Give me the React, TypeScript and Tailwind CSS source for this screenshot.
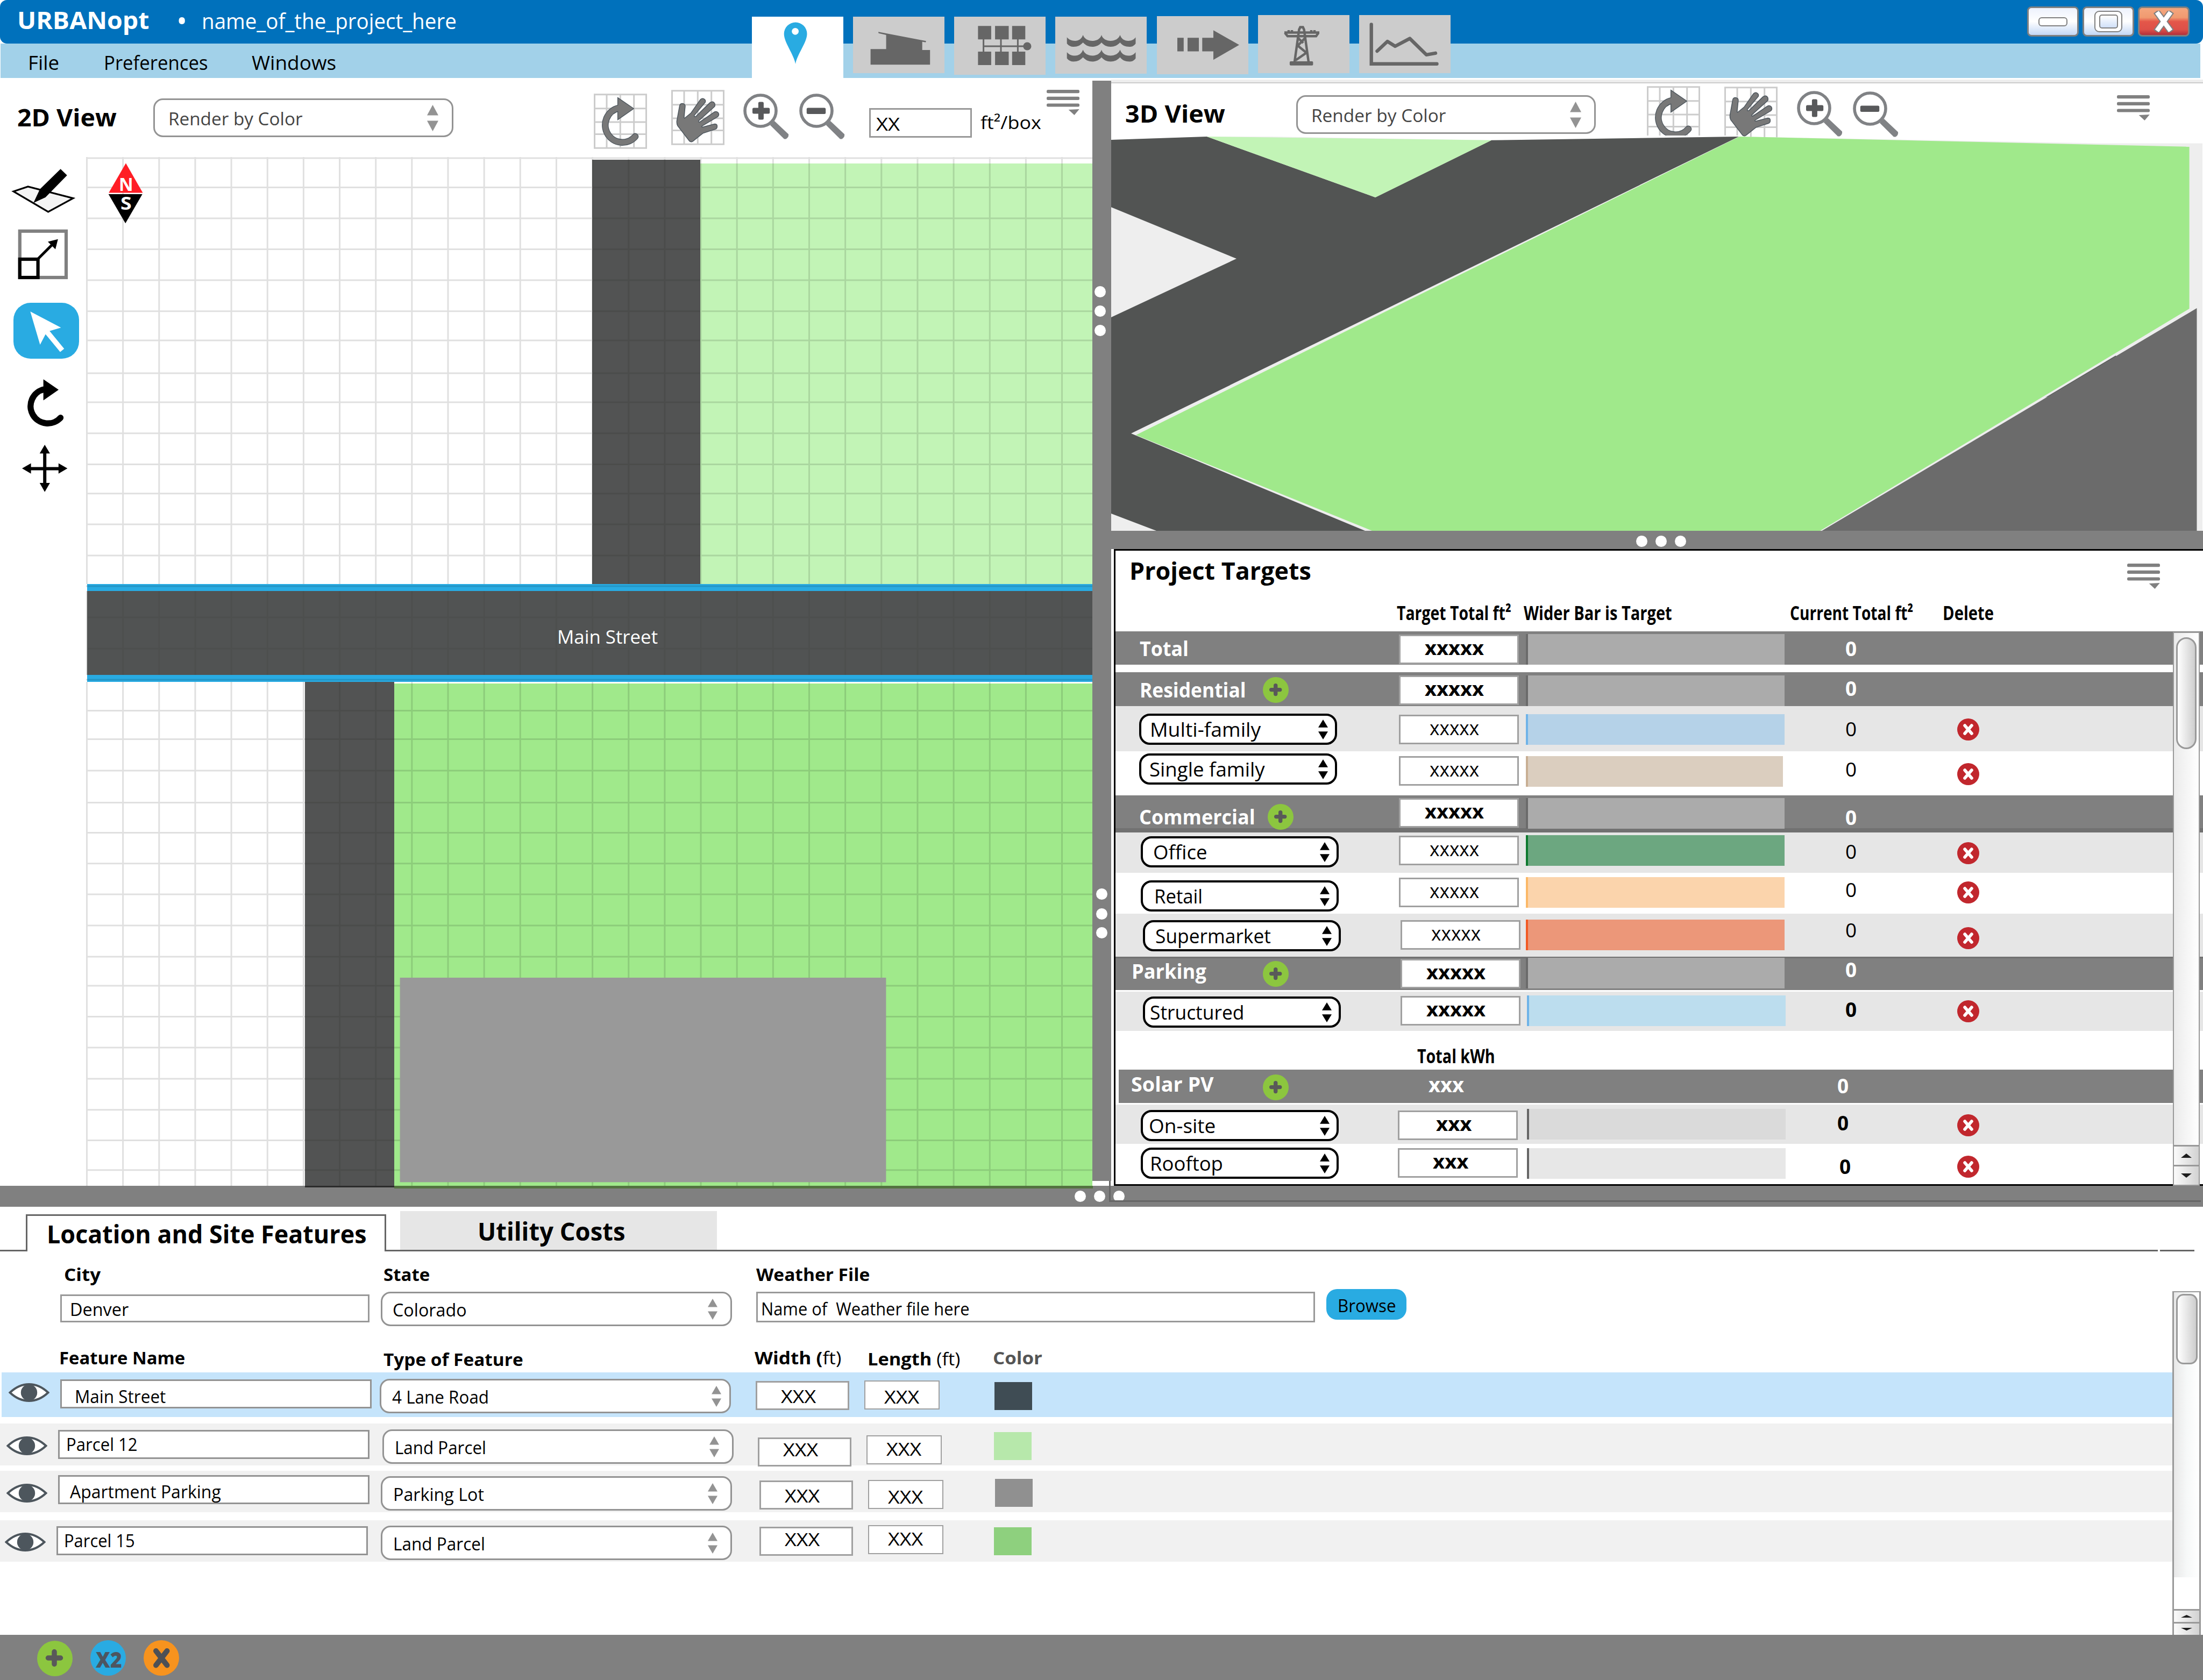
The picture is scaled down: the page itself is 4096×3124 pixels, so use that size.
import { useLayoutEffect, useRef, useState } from 'react';
import type { ReactNode } from 'react';

/** One line of text, condensed or widened to a given ink width. */
function Fit({ w, className = '', children }: { w: number; className?: string; children: ReactNode }) {
  const ref = useRef<HTMLSpanElement>(null);
  const [scale, setScale] = useState(1);
  useLayoutEffect(() => {
    if (ref.current) setScale((w + 4) / ref.current.offsetWidth);
  }, [w]);
  return (
    <span className={`block shrink-0 whitespace-nowrap leading-[40px] ${className}`} style={{ width: w }}>
      <span ref={ref} className="-ml-px block w-max origin-left" style={{ transform: `translateY(1.5px) scaleX(${scale})` }}>
        {children}
      </span>
    </span>
  );
}

function SortArrows({ className }: { className: string }) {
  return (
    <svg viewBox="0 0 20 48" preserveAspectRatio="none" className={`shrink-0 ${className}`} fill="currentColor">
      <path d="M10 0 L20 19 H0 Z M0 29 H20 L10 48 Z" />
    </svg>
  );
}

function GraySelect({ text, w, className, textClass, arrowClass }: { text: string; w: number; className: string; textClass: string; arrowClass: string }) {
  return (
    <div className={`flex shrink-0 items-center justify-between rounded-[18px] border-[3px] border-[#939393] bg-white ${className}`}>
      <Fit w={w} className={textClass}>{text}</Fit>
      <SortArrows className={`text-[#939393] ${arrowClass}`} />
    </div>
  );
}

function MenuIcon({ className }: { className: string }) {
  return (
    <svg viewBox="0 0 61 47" className={`h-[47px] w-[61px] shrink-0 ${className}`} fill="#808080">
      <rect width="61" height="6.2" rx="2.5" />
      <rect y="12.7" width="61" height="6.2" rx="2.5" />
      <rect y="25.4" width="61" height="6.2" rx="2.5" />
      <path d="M40.7 37 L60.7 36 L51.5 47 Z" />
    </svg>
  );
}

function IconGrid() {
  return (
    <path
      d="M1.5 1.5 H97.9 V101.5 H1.5 Z M24.1 1 V102 M49.5 1 V102 M75 1 V102 M0 27.6 H99.4 M0 53 H99.4 M0 75.5 H99.4"
      fill="none"
      stroke="#cccccc"
      strokeWidth="3"
    />
  );
}

function RotateTool({ className }: { className: string }) {
  return (
    <svg viewBox="0 0 99.4 103" className={`h-[103px] w-[99px] shrink-0 ${className}`}>
      <IconGrid />
      <path d="M46 27 A32 32.4 0 1 0 77.4 80" fill="none" stroke="#4d565d" strokeWidth="12.6" strokeLinecap="round" />
      <path d="M44.8 7.4 L74.6 27.9 L44.8 48.6 Z" fill="#787878" stroke="#4d565d" strokeWidth="1.4" />
      <path d="M48 26.6 A32 32.4 0 1 0 77.4 80" fill="none" stroke="#787878" strokeWidth="10" strokeLinecap="round" />
    </svg>
  );
}

function HandTool({ className, shift = 0 }: { className: string; shift?: number }) {
  return (
    <svg viewBox="0 0 99.4 103" className={`h-[103px] w-[99px] shrink-0 ${className}`}>
      <IconGrid />
      <path
        transform={`translate(0 ${shift})`}
        d="M34 95.5 L12 67 Q10 63 10.5 58 L15.7 29.5 Q16.5 25.3 20.7 25.3 Q26.5 26 26 31 L23.8 51 Q24 54 26 52 L37 43 L53 20 Q56 15.5 60 16.3 Q65 18.5 63.5 23 L43.4 47 Q42 51 46 49.5 L72 24 Q76 21 79 22.8 Q83 26 81 31 L51.5 57.5 Q50 61 54 59.5 L80 41.5 Q85 39 88 43 Q90 47 87 50 L57.5 67.5 Q56 70 60 69 L81 63.5 Q86 63.5 85.7 68 Q86 72 82 73.5 L59 81 L40.5 95.7 Q37 98 34 95.5 Z"
        fill="#787878"
        stroke="#4d565d"
        strokeWidth="1.5"
      />
    </svg>
  );
}

function ZoomTool({ plus = false, className }: { plus?: boolean; className: string }) {
  return (
    <svg viewBox="0 0 85 85" className={`h-[85px] w-[85px] shrink-0 ${className}`}>
      <circle cx="32" cy="32" r="29" fill="#fff" stroke="#808285" strokeWidth="5.6" />
      <path d="M57.7 50.7 L84 75.5 Q85 81 79.5 84.5 L76 84.5 L49.8 58.4 Z" fill="#808285" />
      {plus ? (
        <>
          <rect x="17" y="26.6" width="32.2" height="10.8" rx="2.5" fill="#58595b" />
          <rect x="27.9" y="15.6" width="10" height="32.8" rx="2.5" fill="#58595b" />
        </>
      ) : (
        <rect x="13.8" y="26.4" width="35.4" height="11.5" rx="2.5" fill="#58595b" />
      )}
    </svg>
  );
}

const tabs = [
  {
    box: 'mt-[3px] h-[114px] bg-white',
    icon: (
      <g>
        <path d="M81.1 88 C78 70 59.7 48 59.7 32 A21.4 21.4 0 1 1 102.5 32 C102.5 48 84 70 81.1 88 Z" fill="#29abe2" />
        <circle cx="80.6" cy="27.3" r="6.4" fill="#fff" />
      </g>
    ),
  },
  {
    box: 'mt-[3px] h-[105px] bg-[#cccccc]',
    icon: <path d="M47.1 28.3 L135.9 45.3 L135 47.8 L128.7 46.6 V62 H143.2 V89.3 H32.6 V60.3 H61.6 V34 L47.5 30.8 Z" />,
  },
  {
    box: 'mt-[3px] h-[108px] bg-[#cccccc]',
    icon: (
      <g>
        <path d="M44.4 17.3 H68.9 V42.3 H44.4 Z M76.1 17.3 H101.5 V42.3 H76.1 Z M107.8 17.3 H132.3 V42.3 H107.8 Z M44.4 65 H68.9 V90 H44.4 Z M76.1 65 H101.5 V90 H76.1 Z M107.8 65 H132.3 V90 H107.8 Z" />
        <path d="M54.6 42 V65 M87 42 V65 M118.4 42 V65 M54 55 H130" fill="none" stroke="#666" strokeWidth="3" />
        <circle cx="135.9" cy="55" r="7.6" />
      </g>
    ),
  },
  {
    box: 'mt-[3px] h-[106px] bg-[#cccccc]',
    icon: [0, 27.6].map((dy) => (
      <path
        key={dy}
        transform={`translate(0 ${dy})`}
        d="M21.7 38.3 C26 43 30 45 37 45 C44 45 49 41 51.6 34 C54 41 61 45 69 45 C77 45 84 41 86 34 C88 41 95 45 103 45 C111 45 118 41 120.5 34 C123 41 128 45 136 45 C142 45 146 43 149.5 38.3 V50 C146 55 142 56 138 56 C130 56 124 53 120.5 48 C116 53 110 56 103 56 C96 56 90 53 86 48 C82 53 76 56 69 56 C62 56 56 53 51.6 48 C47 53 42 56 34 56 C29 56 25 54 21.7 50 Z"
      />
    )),
  },
  {
    box: 'mt-[2px] h-[108px] bg-[#cccccc]',
    icon: <path d="M38 40.3 H49.8 V65.6 H38 Z M57 40.3 H78 V65.6 H57 Z M84.3 40.3 H105 V26.3 L153 53.6 L105 81.3 V65.6 H84.3 Z" />,
  },
  {
    box: 'h-[108px] bg-[#cccccc]',
    icon: (
      <g>
        <rect x="58.9" y="86" width="43.5" height="7.8" rx="2" />
        <path
          d="M68 87 L76.4 27 L78.5 22.5 H83.5 L85.6 27 L94 87 M49 32.6 H114 M50 33 L55 39.3 H108 L112.5 33 M57 28 V33 M63 28 V33 M99 28 V33 M105 28 V33 M88 42 L74 57 L90 70 L70 84 M75 43 L84 52"
          fill="none"
          stroke="#666"
          strokeWidth="4.5"
        />
      </g>
    ),
  },
  {
    box: 'h-[108px] bg-[#cccccc]',
    icon: (
      <g fill="none" stroke="#666" strokeWidth="6.4" strokeLinecap="round">
        <path d="M22.7 17.5 V90.8 H144.5" />
        <path d="M33.5 67 L52.6 49 L67 58 L94.2 43.6 L125 73.8 L142 70.8" strokeLinejoin="round" />
      </g>
    ),
  },
];

function Header() {
  return (
    <header className="relative h-[145px] text-white">
      <div className="flex h-[81px] items-start rounded-[13px] bg-[#0071bc]">
        <Fit w={241} className="ml-[33px] mt-[15px] text-[45px] font-bold">URBANopt</Fit>
        <span className="ml-[54px] mt-[18px] block w-[16px] text-[54px] leading-[40px]">•</span>
        <Fit w={470} className="ml-[32px] mt-[17px] text-[40px]">name_of_the_project_here</Fit>
        <div className="ml-auto mr-[25px] mt-[12px] flex gap-[7px]">
          <div className="flex h-[56px] w-[96px] items-center justify-center rounded-[8px] border-[3px] border-[#808080] bg-gradient-to-b from-[#edf2fd] via-white to-[#c4d8f5]">
            <div className="h-[17px] w-[54px] rounded-[6px] border-2 border-[#808080] bg-white" />
          </div>
          <div className="flex h-[56px] w-[96px] items-center justify-center rounded-[8px] border-[3px] border-[#808080] bg-gradient-to-b from-[#edf2fd] via-white to-[#c4d8f5]">
            <div className="flex h-[40px] w-[52px] items-center justify-center rounded-[9px] border-2 border-[#808080] bg-white">
              <div className="h-[26px] w-[35px] rounded-[5px] border-2 border-[#808080] bg-gradient-to-b from-white to-[#d0e0f8]" />
            </div>
          </div>
          <div className="flex h-[56px] w-[96px] items-center justify-center rounded-[8px] border-[3px] border-[#808080] bg-linear-[to_bottom,#f4a67e_0%,#f09a70_35%,#e4574a_50%,#dd5048_80%,#b2303c_100%]">
            <svg viewBox="0 0 42 40" className="h-[40px] w-[42px]">
              <path d="M7 1 L35 39 M35 1 L7 39" stroke="#808080" strokeWidth="12.5" />
              <path d="M8.3 2.8 L33.7 37.2 M33.7 2.8 L8.3 37.2" stroke="#fff" strokeWidth="8.6" />
            </svg>
          </div>
        </div>
      </div>
      <nav className="ml-px mr-[5px] flex h-[64px] items-start bg-[#a2d1e9] text-[36px] text-black">
        <Fit w={54} className="ml-[52px] mt-[14px]">File</Fit>
        <Fit w={190} className="ml-[87px] mt-[14px]">Preferences</Fit>
        <Fit w={153} className="ml-[85px] mt-[14px]">Windows</Fit>
      </nav>
      <div className="absolute left-[1397.5px] top-[28px] flex items-start gap-[18.3px]">
        {tabs.map((t, i) => (
          <div key={i} className={`w-[170px] ${t.box}`}>
            <svg viewBox="0 0 170 105" className="h-[105px] w-[170px]" fill="#666666">{t.icon}</svg>
          </div>
        ))}
      </div>
    </header>
  );
}

function DrawingTools() {
  return (
    <div className="flex w-[160px] shrink-0 flex-col items-start">
      <svg viewBox="20 312 120 87" className="ml-[20px] mt-[20px] h-[87px] w-[120px]">
        <path d="M25 356 L52 347 L136 368.6 L89.6 394 Z" fill="#f4f4f4" stroke="#000" strokeWidth="3.2" />
        <path d="M112.6 314.2 L124.7 326.1 L84.5 367.1 L62.2 377.2 L74.2 351.7 Z" />
      </svg>
      <svg viewBox="33 426 94 94" className="ml-[33px] mt-[27px] h-[94px] w-[94px]">
        <rect x="36.8" y="429.8" width="86.2" height="86.2" fill="#fff" stroke="#808080" strokeWidth="6.2" />
        <rect x="36.8" y="482" width="33.8" height="34" fill="#fff" stroke="#000" strokeWidth="6.2" />
        <path d="M69 483 L97 455" stroke="#000" strokeWidth="5" />
        <path d="M107.8 444.7 L89 449.5 L103 463.6 Z" />
      </svg>
      <div className="ml-[25px] mt-[43px] flex h-[104px] w-[122px] rounded-[32px] bg-[#29abe2]">
        <svg viewBox="25 562 122 104" className="h-[104px] w-[122px]" fill="#fff">
          <path d="M56.3 578.3 L113.4 608.2 L92.2 614.4 L119.3 647.5 L111.9 653.6 L84.7 620.6 L74.5 640 Z" />
        </svg>
      </div>
      <svg viewBox="50 703 70 91" className="ml-[50px] mt-[37px] h-[91px] w-[70px]">
        <path d="M82 723 A32 32 0 1 0 112.6 775.7" fill="none" stroke="#000" strokeWidth="11.4" />
        <circle cx="112.6" cy="775.7" r="5.6" />
        <path d="M80.6 704.3 L109 723.7 L80.6 743.6 Z" />
      </svg>
      <svg viewBox="40 825 86 90" className="ml-[40px] mt-[31px] h-[90px] w-[86px]">
        <path d="M83.2 835 V905 M50 870.6 H116" stroke="#000" strokeWidth="6" />
        <path d="M83.2 826 L92.9 842.3 H73.7 Z M83.2 913.7 L92.9 897 H73.7 Z M41 870 L57.6 860.4 V879.8 Z M125.4 870 L108.8 860.4 V879.8 Z" />
      </svg>
    </div>
  );
}

const gridX = Array.from({ length: 28 }, (_, i) => 161.5 + i * 67.15);
const gridY = [
  294, 348.6, 406, 463.6, 521, 578.7, 633, 694, 748, 805.7, 863.5, 917.7, 975, 1033, 1090, 1148, 1206, 1264, 1321.5, 1374.4, 1433,
  1492.5, 1548.5, 1605.8, 1663, 1721, 1779, 1833, 1890.5, 1948, 2006, 2063.7, 2120.5, 2175.8,
];

function SiteMap() {
  return (
    <div className="relative h-[1913px] w-[1871px] shrink-0">
      <svg viewBox="160 292 1871 1913" className="h-[1913px] w-[1871px]">
        <rect x="1101" y="297" width="201" height="800" fill="#525453" />
        <rect x="1302" y="304" width="729" height="782" fill="#c2f4b6" />
        <rect x="567" y="1268" width="166" height="940" fill="#525453" />
        <rect x="733" y="1271" width="1298" height="940" fill="#a0e98b" />
        <rect x="162" y="1086" width="1869" height="182" fill="#29abe2" />
        <rect x="162" y="1099" width="1869" height="156" fill="#525453" />
        <path
          d={gridX.map((x) => `M${x} 292 V1086 M${x} 1099 V1255 M${x} 1268 V2205`).join(' ') + gridY.map((y) => `M160 ${y} H2031`).join(' ')}
          stroke="#000"
          strokeOpacity="0.12"
          strokeWidth="3"
        />
        <path d="M1101 297 H1302 V1086 H1101 Z M567 1268 H733 V2205 H567 Z" fill="#525453" fillOpacity="0.3" />
        <rect x="162" y="1099" width="1869" height="156" fill="#525453" fillOpacity="0.6" />
        <rect x="743.6" y="1818" width="903.8" height="380.3" fill="#999999" />
        <path d="M234 303.6 L265.5 358.6 H202.2 Z" fill="#ff1d25" />
        <path d="M201.7 361 H264.7 L233.2 415.2 Z" />
      </svg>
      <Fit w={23} className="absolute left-[62px] top-[28px] text-[34px] font-bold text-white">N</Fit>
      <Fit w={17} className="absolute left-[65px] top-[63px] text-[34px] font-bold text-white">S</Fit>
      <Fit w={183} className="absolute left-[877px] top-[870px] text-[35px] text-white">Main Street</Fit>
    </div>
  );
}

function View2D() {
  return (
    <section className="w-[2031px] shrink-0">
      <div className="flex h-[147px] items-start">
        <Fit w={181} className="ml-[33px] mt-[51px] text-[45px] font-bold">2D View</Fit>
        <GraySelect text="Render by Color" w={246} className="ml-[71px] mt-[38px] h-[72px] w-[558px]" textClass="ml-[26px] text-[33px] text-[#444]" arrowClass="mr-[25px] h-[49px] w-[21px]" />
        <RotateTool className="ml-[261px] mt-[29px]" />
        <HandTool className="ml-[45px] mt-[22px]" />
        <ZoomTool plus className="ml-[35px] mt-[29px]" />
        <ZoomTool className="ml-[19px] mt-[29px]" />
        <div className="ml-[45px] mt-[56px] flex h-[55px] w-[191px] shrink-0 items-center border-[3px] border-[#999]">
          <Fit w={40} className="ml-[11px] text-[33px]">XX</Fit>
        </div>
        <Fit w={109} className="ml-[17px] mt-[61px] text-[33px]">ft²/box</Fit>
        <MenuIcon className="ml-[13px] mt-[22px]" />
      </div>
      <div className="flex">
        <DrawingTools />
        <SiteMap />
      </div>
    </section>
  );
}

function Dot({ className = '' }: { className?: string }) {
  return <span className={`block size-[21px] shrink-0 rounded-full bg-white ${className}`} />;
}

function View3D() {
  return (
    <section>
      <div className="mt-[3px] h-[7px] border-b-2 border-[#cccccc] bg-[#eeeeee]" />
      <div className="flex h-[97px] items-start">
        <Fit w={182} className="ml-[27px] mt-[34px] text-[45px] font-bold">3D View</Fit>
        <GraySelect text="Render by Color" w={247} className="ml-[135px] mt-[22px] h-[72px] w-[557px]" textClass="ml-[26px] text-[33px] text-[#444]" arrowClass="mr-[24px] h-[49px] w-[21px]" />
        <RotateTool className="ml-[95px] mt-[5px]" />
        <HandTool className="ml-[45px] mt-[6px]" shift={-5} />
        <ZoomTool plus className="ml-[36px] mt-[14px]" />
        <ZoomTool className="ml-[19px] mt-[15px]" />
        <MenuIcon className="ml-[406px] mt-[22px]" />
      </div>
      <svg viewBox="2066 252 2030 735" className="relative z-10 h-[735px] w-[2030px]">
        <path d="M2066 260 L2244 254 L3233 254 L3900 266.5 H4095 V987 H2066 Z" fill="#eeeeee" />
        <path d="M2066 254 H2244 L2066 260 Z M2244 252 H3233 V254 L2773 260.8 Z" fill="#fff" />
        <path d="M2066 260 L2244 254 L2557 367 L2773 260.8 L3233 254 L4000 700 L2538 987 H2150 L2066 955 V590 L2299 481 L2066 385.3 Z" fill="#525453" />
        <path d="M2244 254 L2773 260.8 L2557.3 367 Z" fill="#c2f4b6" />
        <path d="M3233 254 L2103 806 L2538 987 H3388 L4083 572 L4070 300 Z" fill="#eeeeee" />
        <path d="M3234 254 L4070.6 272.8 V574 L3384 987 H2551 L2112 809 Z" fill="#a0e98b" />
        <path d="M3387.5 987 L4084.5 573 V987 Z" fill="#6b6b6b" />
      </svg>
    </section>
  );
}

type Target = {
  row: string;
  name: string;
  nameW: number;
  nameClass: string;
  plus?: string;
  select?: string;
  box?: string;
  value: string;
  valueW: number;
  valueClass: string;
  bar?: string;
  zero: string;
  del?: string;
};

const band = 'bg-[#808080] text-white';
const targets: Target[] = [
  { row: `h-[62px] mb-[14px] ${band}`, name: 'Total', nameW: 87, nameClass: 'ml-[46px] mt-[10px]', box: 'ml-[3px] mt-[6px]', value: 'xxxxx', valueW: 106, valueClass: 'ml-[46px] font-bold', bar: 'ml-[3px] mt-[5px] bg-[#ababab] border-[#6b6b6b]', zero: 'ml-[103px] mt-[10px] font-bold' },
  { row: `h-[63px] ${band}`, name: 'Residential', nameW: 194, nameClass: 'ml-[46px] mt-[11px]', plus: 'ml-[34px] mt-[9px]', box: 'ml-[3px] mt-[6px]', value: 'xxxxx', valueW: 106, valueClass: 'ml-[46px] font-bold', bar: 'ml-[3px] mt-[6px] bg-[#ababab] border-[#6b6b6b]', zero: 'ml-[103px] mt-[8px] font-bold' },
  { row: 'h-[84px] bg-[#e6e6e6]', name: 'Multi-family', nameW: 202, nameClass: 'ml-[17px]', select: 'ml-[44px] mt-[14px]', box: 'ml-[3px] mt-[16px]', value: 'xxxxx', valueW: 88, valueClass: 'ml-[55px]', bar: 'ml-[3px] mt-[15px] bg-[#b5d2e8] border-[#6fb3e8]', zero: 'ml-[103px] mt-[20px]', del: 'mt-[23px]' },
  { row: 'h-[82px]', name: 'Single family', nameW: 211, nameClass: 'ml-[16px]', select: 'ml-[44px] mt-[4px]', box: 'ml-[3px] mt-[9px]', value: 'xxxxx', valueW: 88, valueClass: 'ml-[55px]', bar: 'ml-[3px] mr-[14px] mt-[9px] bg-[#dbcebf] border-[#c8af94]', zero: 'ml-[103px] mt-[11px]', del: 'mt-[22px]' },
  { row: `h-[69px] shadow-[inset_0_-8px_0_#717171] ${band}`, name: 'Commercial', nameW: 212, nameClass: 'ml-[45px] mt-[18px]', plus: 'ml-[26px] mt-[16px]', box: 'ml-[3px] mt-[5px]', value: 'xxxxx', valueW: 106, valueClass: 'ml-[46px] font-bold', bar: 'ml-[3px] mt-[5px] bg-[#ababab] border-[#6b6b6b]', zero: 'ml-[103px] mt-[19px] font-bold' },
  { row: 'h-[75px] bg-[#e6e6e6]', name: 'Office', nameW: 97, nameClass: 'ml-[20px]', select: 'ml-[47px] mt-[7px]', box: 'ml-[3px] mt-[6px]', value: 'xxxxx', valueW: 88, valueClass: 'ml-[55px]', bar: 'ml-[3px] mt-[5px] bg-[#6ca780] border-[#0f7a30]', zero: 'ml-[103px] mt-[13px]', del: 'mt-[18px]' },
  { row: 'h-[76px]', name: 'Retail', nameW: 86, nameClass: 'ml-[22px]', select: 'ml-[47px] mt-[14px]', box: 'ml-[3px] mt-[9px]', value: 'xxxxx', valueW: 88, valueClass: 'ml-[55px]', bar: 'ml-[3px] mt-[8px] bg-[#fbd4ac] border-[#fbb867]', zero: 'ml-[103px] mt-[9px]', del: 'mt-[16px]' },
  { row: 'h-[80px] bg-[#e6e6e6]', name: 'Supermarket', nameW: 211, nameClass: 'ml-[20px]', select: 'ml-[51px] mt-[12px]', box: 'ml-[6px] mt-[12px]', value: 'xxxxx', valueW: 88, valueClass: 'ml-[55px]', bar: 'ml-[3px] mt-[11px] bg-[#ec9779] border-[#f15a24]', zero: 'ml-[103px] mt-[8px]', del: 'mt-[25px]' },
  { row: `h-[62px] mb-[3px] shadow-[inset_0_3px_0_#717171] ${band}`, name: 'Parking', nameW: 135, nameClass: 'ml-[31px] mt-[5px]', plus: 'ml-[108px] mt-[8px]', box: 'ml-[6px] mt-[4px]', value: 'xxxxx', valueW: 106, valueClass: 'ml-[46px] font-bold', bar: 'ml-[3px] mt-[2px] bg-[#ababab] border-[#6b6b6b]', zero: 'ml-[103px] mt-[2px] font-bold' },
  { row: 'h-[73px] bg-[#e6e6e6]', name: 'Structured', nameW: 171, nameClass: 'ml-[10px]', select: 'ml-[51px] mt-[9px]', box: 'ml-[6px] mt-[8px]', value: 'xxxxx', valueW: 106, valueClass: 'ml-[46px] font-bold', bar: 'ml-[5px] mt-[7px] bg-[#bcddee] border-[#6fb3e8]', zero: 'ml-[103px] mt-[11px] font-bold', del: 'mt-[16px]' },
];

const solar: Target[] = [
  { row: `h-[62px] mb-[3px] shadow-[inset_6px_0_0_#fff] ${band}`, name: 'Solar PV', nameW: 150, nameClass: 'ml-[30px] mt-[5px]', plus: 'ml-[94px] mt-[9px]', value: 'xxx', valueW: 62, valueClass: 'ml-[59px] mt-[6px] font-bold', zero: 'ml-[88px] mt-[8px] font-bold' },
  { row: 'h-[73px] bg-[#e6e6e6]', name: 'On-site', nameW: 120, nameClass: 'ml-[12px]', select: 'ml-[47px] mt-[10px]', box: 'ml-px mt-[11px]', value: 'xxx', valueW: 62, valueClass: 'ml-[69px] font-bold', bar: 'ml-[5px] mt-[8px] bg-[#dadada] border-[#666]', zero: 'ml-[88px] mt-[12px] font-bold', del: 'mt-[18px]' },
  { row: 'h-[75px]', name: 'Rooftop', nameW: 132, nameClass: 'ml-[14px]', select: 'ml-[47px] mt-[7px]', box: 'ml-px mt-[8px]', value: 'xxx', valueW: 62, valueClass: 'ml-[63px] font-bold', bar: 'ml-[5px] mt-[8px] bg-[#e7e7e7] border-[#666]', zero: 'ml-[92px] mt-[20px] font-bold', del: 'mt-[22px]' },
];

function TargetRow({ t }: { t: Target }) {
  return (
    <div className={`grid grid-cols-[524px_236px_495px_284px_1fr] items-start text-[37px] ${t.row}`}>
      {t.select ? (
        <div className={`flex h-[58px] w-[368px] items-center justify-between rounded-[20px] border-4 border-black bg-white ${t.select}`}>
          <Fit w={t.nameW} className={`-mt-[4px] ${t.nameClass}`}>{t.name}</Fit>
          <SortArrows className="mr-[13px] h-[37px] w-[18px] text-black" />
        </div>
      ) : (
        <div className="flex items-start">
          <Fit w={t.nameW} className={`font-bold ${t.nameClass}`}>{t.name}</Fit>
          {t.plus && (
            <svg viewBox="0 0 48 48" className={`size-[48px] ${t.plus}`}>
              <circle cx="24" cy="24" r="24" fill="#8cc63f" />
              <path d="M15.7 23.6 H31.7 M23.7 15.6 V31.6" stroke="#595959" strokeWidth="7.4" strokeLinecap="round" />
            </svg>
          )}
        </div>
      )}
      {t.box ? (
        <div className={`h-[55px] w-[223px] border-[3px] border-[#a0a0a0] bg-white text-[36px] text-black ${t.box}`}>
          <Fit w={t.valueW} className={t.valueClass}>{t.value}</Fit>
        </div>
      ) : (
        <Fit w={t.valueW} className={t.valueClass}>{t.value}</Fit>
      )}
      {t.bar ? <div className={`h-[57px] max-w-[481px] border-l-4 ${t.bar}`} /> : <span />}
      <Fit w={17} className={t.zero}>0</Fit>
      {t.del && (
        <svg viewBox="0 0 42 42" className={`ml-[26px] size-[41px] ${t.del}`}>
          <circle cx="21" cy="21" r="21" fill="#c1272d" />
          <path d="M14.5 13.5 L27.5 28.5 M27.5 13.5 L14.5 28.5" stroke="#fff" strokeWidth="6" strokeLinecap="round" />
        </svg>
      )}
    </div>
  );
}

function ScrollButtons({ className, icon }: { className: string; icon: string }) {
  return (
    <>
      <div className={`flex items-center justify-center border-t-[3px] border-[#999] bg-gradient-to-r from-[#fbfbfb] to-[#d2d2d2] ${className}`}>
        <svg viewBox="0 0 20 8" preserveAspectRatio="none" className={icon}><path d="M10 0 L20 8 H0 Z" fill="#1e1e1e" /></svg>
      </div>
      <div className={`flex items-center justify-center border-t-[3px] border-[#999] bg-gradient-to-r from-[#fbfbfb] to-[#d2d2d2] ${className}`}>
        <svg viewBox="0 0 20 8" preserveAspectRatio="none" className={icon}><path d="M0 0 H20 L10 8 Z" fill="#1e1e1e" /></svg>
      </div>
    </>
  );
}

function ProjectTargets() {
  return (
    <section className="ml-[3px] h-[1184px] bg-white pl-[2px]">
      <div className="relative h-[1184px] border-y-[3px] border-l-[3px] border-black">
        <div className="flex h-[94px] items-start">
          <Fit w={334} className="ml-[27px] mt-[15px] text-[45px] font-bold">Project Targets</Fit>
          <MenuIcon className="ml-[1520px] mt-[24px]" />
        </div>
        <div className="grid h-[56px] grid-cols-[524px_236px_495px_284px_1fr] items-start text-[36px] font-bold">
          <span />
          <Fit w={209}>Target Total ft²</Fit>
          <Fit w={272}>Wider Bar is Target</Fit>
          <Fit w={225}>Current Total ft²</Fit>
          <Fit w={91}>Delete</Fit>
        </div>
        {targets.map((t) => <TargetRow key={t.name} t={t} />)}
        <div className="h-[72px] pl-[562px] pt-[25px]">
          <Fit w={141} className="text-[36px] font-bold">Total kWh</Fit>
        </div>
        {solar.map((t) => <TargetRow key={t.name} t={t} />)}
        <div className="absolute right-[6px] top-[151px] flex h-[1030px] w-[50px] flex-col border-2 border-[#999] bg-gradient-to-r from-[#ebebeb] to-white">
          <div className="mx-auto mt-[8px] h-[208px] w-[38px] rounded-[19px] border-[3px] border-[#999] bg-gradient-to-r from-white to-[#cecece]" />
          <div className="flex-1" />
          <ScrollButtons className="h-[37px]" icon="h-[8px] w-[20px]" />
        </div>
      </div>
    </section>
  );
}

type Feature = {
  row: string;
  eye: string;
  name: string;
  nameW: number;
  nameBox: string;
  nameText: string;
  type: string;
  typeW: number;
  typeBox: string;
  typeArrow: string;
  widthBox: string;
  widthText: string;
  lengthBox: string;
  lengthText: string;
  swatch: string;
};

const features: Feature[] = [
  { row: 'ml-[3px] mb-[12px] h-[83px] bg-[#c5e4fb]', eye: 'ml-[13px] mt-[20px]', name: 'Main Street', nameW: 165, nameBox: 'ml-[20px] mt-[13px]', nameText: 'ml-[25px] mt-[7px]', type: '4 Lane Road', typeW: 176, typeBox: 'ml-[15px] mt-[12px]', typeArrow: 'mr-[15px]', widthBox: 'ml-[46px] mt-[16px]', widthText: 'mt-[4px]', lengthBox: 'ml-[28px] mt-[15px]', lengthText: 'mt-[7px]', swatch: 'ml-[102px] mt-[18px] bg-[#3f4c54]' },
  { row: 'mb-[10px] h-[78px] bg-[#f1f1f1]', eye: 'ml-[12px] mt-[24px]', name: 'Parcel 12', nameW: 129, nameBox: 'ml-[20px] mt-[12px]', nameText: 'ml-[13px] mt-[2px]', type: 'Land Parcel', typeW: 166, typeBox: 'ml-[24px] mt-[11px]', typeArrow: 'mr-[24px]', widthBox: 'ml-[45px] mt-[26px]', widthText: '-mt-[2px]', lengthBox: 'ml-[28px] mt-[22px]', lengthText: 'mt-[2px]', swatch: 'ml-[97px] mt-[16px] bg-[#b7e8ab]' },
  { row: 'mb-[15px] h-[77px] bg-[#f1f1f1]', eye: 'ml-[12px] mt-[24px]', name: 'Apartment Parking', nameW: 277, nameBox: 'ml-[20px] mt-[8px]', nameText: 'ml-[20px] mt-[6px]', type: 'Parking Lot', typeW: 165, typeBox: 'ml-[21px] mt-[10px]', typeArrow: 'mr-[24px]', widthBox: 'ml-[51px] mt-[18px]', widthText: 'mt-[4px]', lengthBox: 'ml-[28px] mt-[17px]', lengthText: 'mt-[8px]', swatch: 'ml-[96px] mt-[15px] bg-[#909090]' },
  { row: 'h-[77px] bg-[#f1f1f1]', eye: 'ml-[9px] mt-[23px]', name: 'Parcel 15', nameW: 128, nameBox: 'ml-[20px] mt-[11px]', nameText: 'ml-[12px] mt-[2px]', type: 'Land Parcel', typeW: 167, typeBox: 'ml-[24px] mt-[10px]', typeArrow: 'mr-[24px]', widthBox: 'ml-[51px] mt-[12px]', widthText: '-mt-[1px]', lengthBox: 'ml-[28px] mt-[9px]', lengthText: 'mt-[2px]', swatch: 'ml-[94px] mt-[13px] bg-[#8ed07e]' },
];

function FeatureRow({ f }: { f: Feature }) {
  return (
    <div className={`flex items-start text-[33px] ${f.row}`}>
      <svg viewBox="0 0 76 35" className={`h-[35px] w-[76px] shrink-0 ${f.eye}`}>
        <path d="M2.5 17.5 Q19 2 38 2 Q57 2 73.5 17.5 Q57 33 38 33 Q19 33 2.5 17.5 Z" fill="#fff" stroke="#4d565d" strokeWidth="4" />
        <circle cx="38" cy="17.5" r="15.2" fill="#4d565d" />
      </svg>
      <div className={`h-[54px] w-[579px] shrink-0 border-[3px] border-[#939393] bg-white ${f.nameBox}`}>
        <Fit w={f.nameW} className={f.nameText}>{f.name}</Fit>
      </div>
      <GraySelect text={f.type} w={f.typeW} className={`h-[64px] w-[653px] ${f.typeBox}`} textClass="ml-[21px]" arrowClass={`h-[39px] w-[18px] ${f.typeArrow}`} />
      <div className={`h-[54px] w-[174px] shrink-0 border-[3px] border-[#a0a0a0] bg-white ${f.widthBox}`}>
        <Fit w={61} className={`ml-[45px] ${f.widthText}`}>XXX</Fit>
      </div>
      <div className={`h-[54px] w-[140px] shrink-0 border-2 border-[#a0a0a0] bg-white ${f.lengthBox}`}>
        <Fit w={61} className={`ml-[36px] ${f.lengthText}`}>XXX</Fit>
      </div>
      <div className={`h-[52px] w-[70px] shrink-0 ${f.swatch}`} />
    </div>
  );
}

function BottomPanel() {
  return (
    <section className="h-[796px] bg-white">
      <div className="flex h-[83px]">
        <div className="w-[48px] border-b-[3px] border-[#666]" />
        <div className="mt-[14px] w-[670px] border-x-[3px] border-t-[3px] border-[#666]">
          <Fit w={590} className="ml-[37px] mt-[11px] text-[46px] font-bold">Location and Site Features</Fit>
        </div>
        <div className="w-[26px] border-b-[3px] border-[#666]" />
        <div className="mt-[8px] w-[589px] border-b-[3px] border-[#666] bg-[#e6e6e6]">
          <Fit w={270} className="ml-[145px] mt-[15px] text-[46px] font-bold">Utility Costs</Fit>
        </div>
        <div className="w-[2679px] border-b-[3px] border-[#666]" />
        <div className="ml-[4px] w-[64px] border-b-[3px] border-[#666]" />
      </div>
      <div className="flex h-[713px]">
        <div className="w-[4039px] shrink-0 text-[33px]">
          <div className="flex h-[70px] items-start pt-[21px] font-bold">
            <Fit w={64} className="ml-[120px]">City</Fit>
            <Fit w={82} className="ml-[530px]">State</Fit>
            <Fit w={207} className="ml-[611px]">Weather File</Fit>
          </div>
          <div className="flex h-[105px] items-start">
            <div className="ml-[112px] mt-[10px] flex h-[52px] w-[575px] items-center border-[3px] border-[#999]">
              <Fit w={105} className="ml-[16px]">Denver</Fit>
            </div>
            <GraySelect text="Colorado" w={134} className="ml-[21px] mt-[5px] h-[64px] w-[653px]" textClass="ml-[20px]" arrowClass="mr-[24px] h-[39px] w-[18px]" />
            <div className="ml-[45px] mt-[5px] flex h-[57px] w-[1039px] items-center border-[3px] border-[#999]">
              <Fit w={384} className="ml-[7px] mt-[3px] whitespace-pre">Name of  Weather file here</Fit>
            </div>
            <div className="ml-[21px] flex h-[57px] w-[149px] items-center justify-center rounded-[20px] bg-[#29abe2]">
              <Fit w={105}>Browse</Fit>
            </div>
          </div>
          <div className="flex h-[50px] items-start font-bold">
            <Fit w={230} className="ml-[111px] mt-px">Feature Name</Fit>
            <Fit w={256} className="ml-[373px] mt-[4px]">Type of Feature</Fit>
            <Fit w={157} className="ml-[434px] mt-px">Width (<span className="font-normal">ft)</span></Fit>
            <Fit w={168} className="ml-[53px] mt-[3px]">Length <span className="font-normal">(ft)</span></Fit>
            <Fit w={88} className="ml-[65px] mt-px text-[#555]">Color</Fit>
          </div>
          {features.map((f) => <FeatureRow key={f.name} f={f} />)}
        </div>
        <div className="mt-[74px] flex h-[639px] w-[53px] flex-col border-x-[3px] border-t-2 border-[#999]">
          <div className="h-[530px] shrink-0 bg-gradient-to-r from-[#e8e8e8] via-[#f6f8f8] to-white pt-[3px]">
            <div className="mx-auto h-[131px] w-[40px] rounded-[14px] border-[3px] border-[#999] bg-gradient-to-r from-white to-[#cecece]" />
          </div>
          <div className="flex-1" />
          <ScrollButtons className="h-[24px] shrink-0" icon="h-[5px] w-[21px]" />
        </div>
      </div>
    </section>
  );
}

export default function App() {
  return (
    <div className="flex h-[3124px] w-[4096px] flex-col overflow-hidden bg-white font-['Open_Sans','Noto_Sans',sans-serif] text-black">
      <Header />
      <main className="flex h-[2060px]">
        <View2D />
        <div className="mt-[5px] flex h-[2046px] w-[35px] shrink-0 flex-col items-center bg-[#808080] pt-[382px]">
          <Dot className="mr-[7px]" />
          <Dot className="mr-[7px] mt-[15px]" />
          <Dot className="mr-[7px] mt-[15px]" />
          <Dot className="mt-[1027px]" />
          <Dot className="mt-[16px]" />
          <Dot className="mt-[14px]" />
        </div>
        <div className="w-[2030px] shrink-0">
          <View3D />
          <div className="relative z-10 flex h-[34px] items-center gap-[15px] bg-[#808080] pl-[976px] pt-[5px]">
            <Dot />
            <Dot />
            <Dot />
          </div>
          <ProjectTargets />
        </div>
      </main>
      <div className="relative flex h-[39px] shrink-0 items-center gap-[15px] bg-[#808080] pl-[1998px]">
        <Dot />
        <Dot />
        <Dot />
        <div className="absolute left-[567px] top-0 h-[3px] w-[166px] bg-[#2b2b2b]" />
        <div className="absolute left-[733px] top-0 h-[5px] w-[1299px] bg-[#537340]" />
        <div className="absolute -top-[9px] left-[2062px] h-[39px] w-[2030px] border-b-[3px] border-l-[3px] border-[#666]" />
      </div>
      <BottomPanel />
      <footer className="flex h-[84px] items-start bg-[#808080]">
        <svg viewBox="0 0 66 66" className="ml-[69px] mt-[11px] size-[66px]">
          <circle cx="33" cy="33" r="33" fill="#8cc63f" />
          <path d="M20.5 32 H43.5 M32 20.5 V43.5" stroke="#595959" strokeWidth="9.5" strokeLinecap="round" />
        </svg>
        <div className="ml-[33px] mt-[10px] flex size-[66px] items-center justify-center rounded-full bg-[#29abe2]">
          <Fit w={45} className="text-[41px] font-extrabold text-[#4d5560]">X2</Fit>
        </div>
        <svg viewBox="0 0 66 66" className="ml-[33px] mt-[10px] size-[66px]">
          <circle cx="33" cy="33" r="33" fill="#f7931e" />
          <path d="M23 20 L43.5 46.5 M43.5 20 L23 46.5" stroke="#4d5055" strokeWidth="10" strokeLinecap="round" />
        </svg>
      </footer>
    </div>
  );
}
